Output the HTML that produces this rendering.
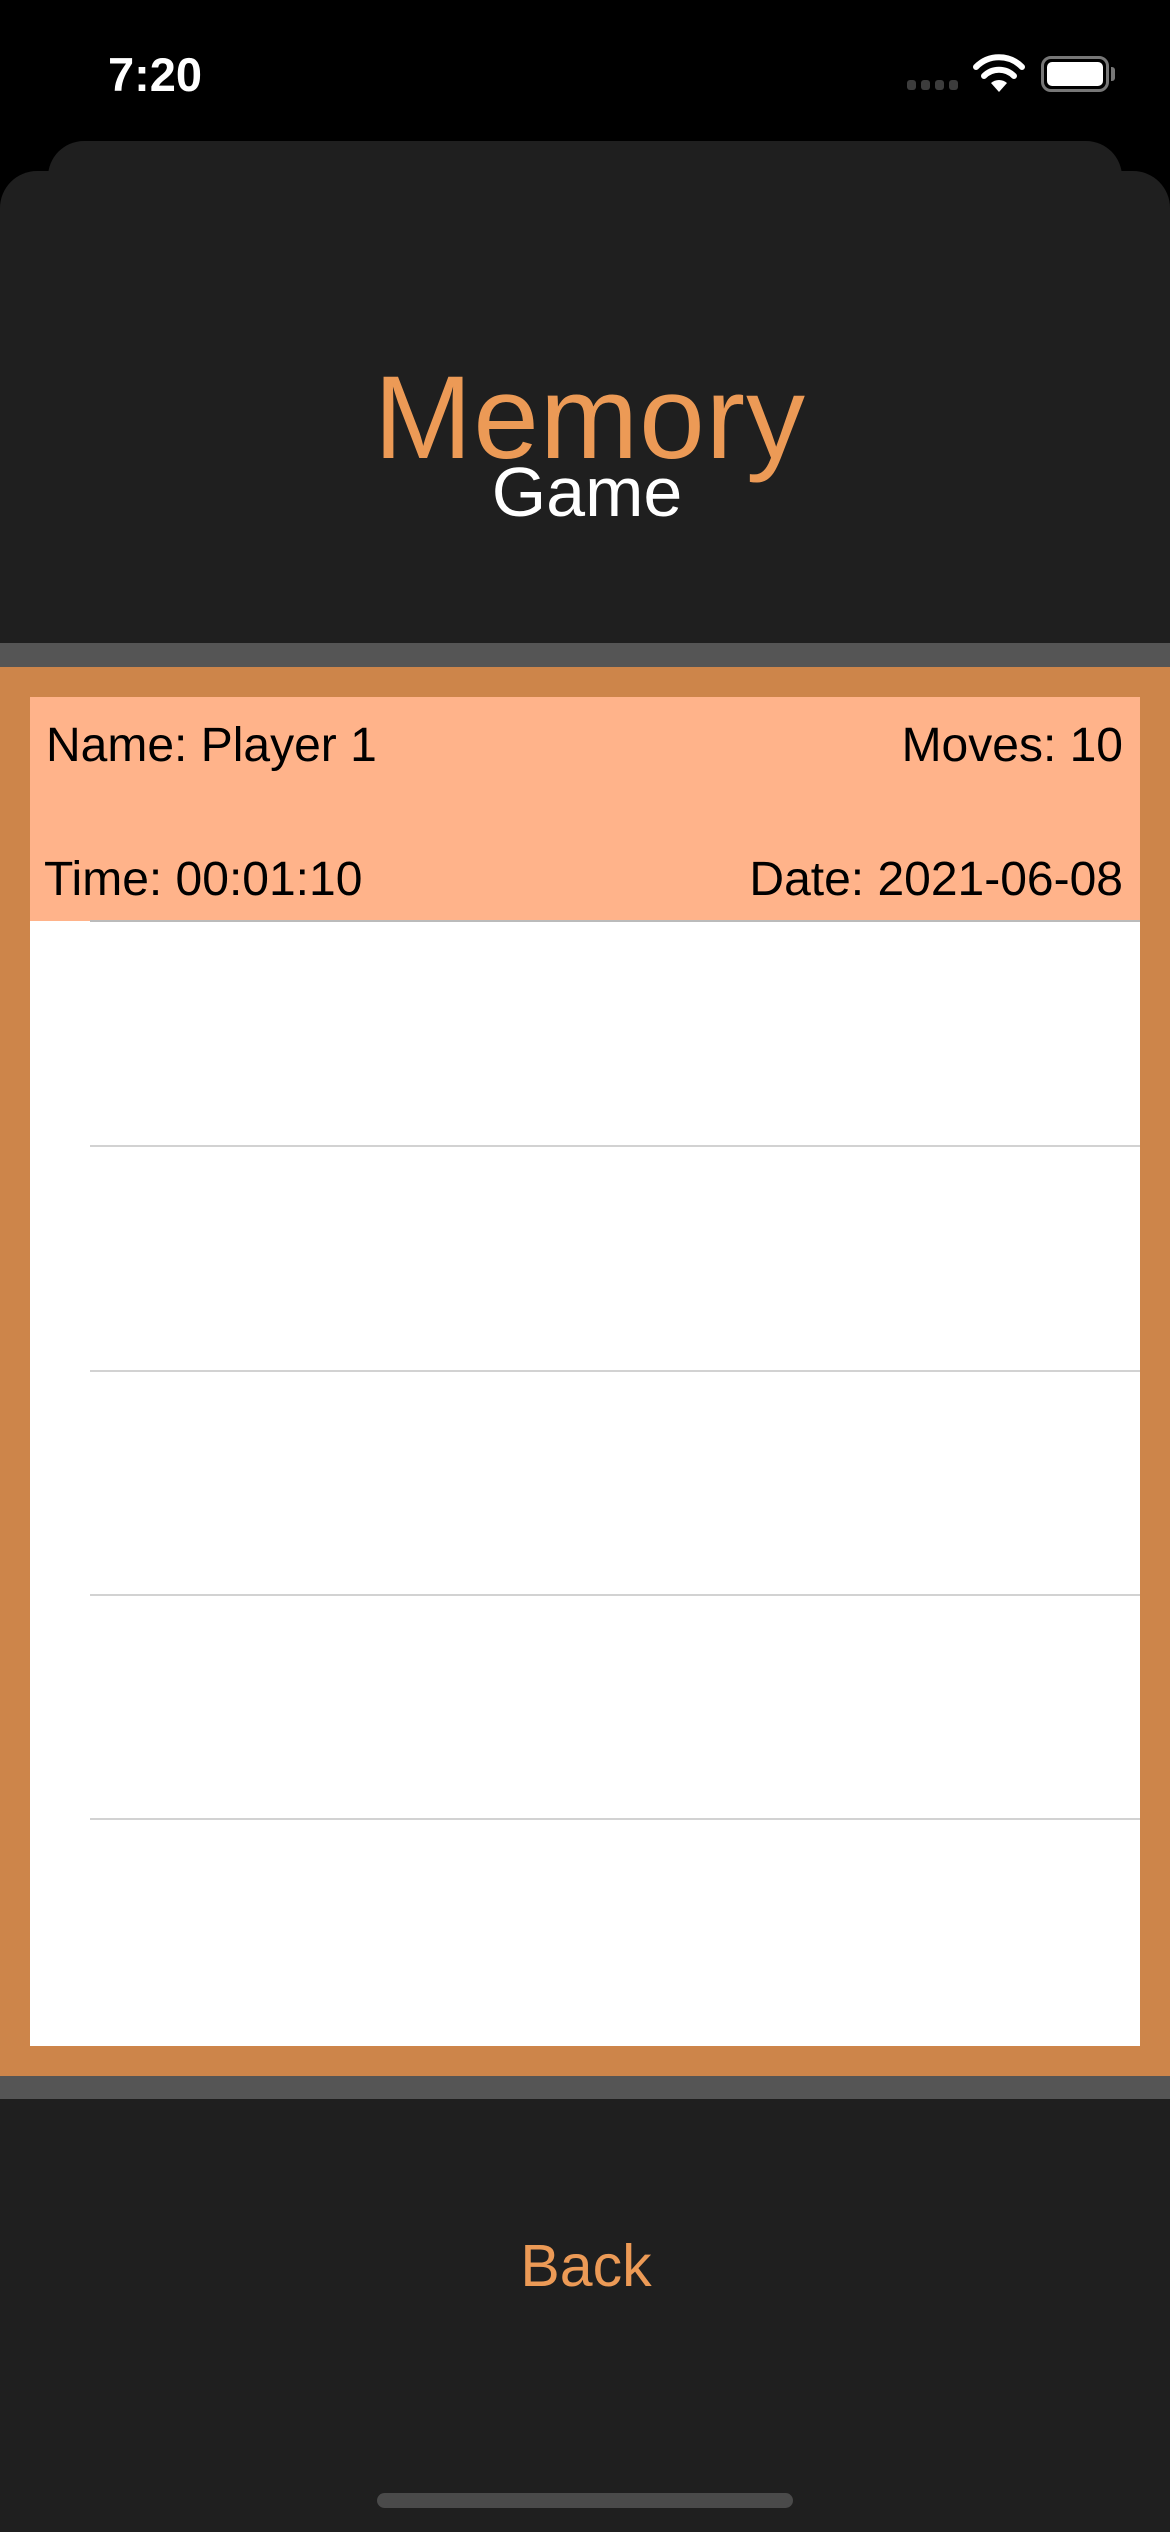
<!DOCTYPE html>
<html><head><meta charset="utf-8"><style>
*{margin:0;padding:0;box-sizing:border-box}
body{width:1170px;height:2532px;background:#000;position:relative;overflow:hidden;font-family:"Liberation Sans",Arial,sans-serif}
.a{position:absolute}
.sep{position:absolute;left:90px;right:30px;height:2px;background:#d2d2d2}
</style></head><body>
<div class="a" style="left:108px;top:50px;font-size:47px;font-weight:bold;color:#fff;line-height:50px">7:20</div>
<div class="a" style="left:907px;top:80px;width:9px;height:10px;border-radius:3px;background:#3c3c3c"></div>
<div class="a" style="left:921px;top:80px;width:9px;height:10px;border-radius:3px;background:#3c3c3c"></div>
<div class="a" style="left:935px;top:80px;width:9px;height:10px;border-radius:3px;background:#3c3c3c"></div>
<div class="a" style="left:949px;top:80px;width:9px;height:10px;border-radius:3px;background:#3c3c3c"></div>
<svg class="a" style="left:972px;top:54px" width="54" height="40" viewBox="0 0 54 40"><path d="M27 38 L19 29 A12 12 0 0 1 35 29 Z" fill="#fff"/><path d="M12 22 A21 21 0 0 1 42 22" stroke="#fff" stroke-width="6" fill="none" stroke-linecap="round"/><path d="M4 13 A32 32 0 0 1 50 13" stroke="#fff" stroke-width="6" fill="none" stroke-linecap="round"/></svg>
<div class="a" style="left:1041px;top:56px;width:68px;height:36px;border:3px solid #777;border-radius:10px;padding:3px"><div style="width:100%;height:100%;background:#fff;border-radius:5px"></div></div>
<div class="a" style="left:1111px;top:67px;width:4px;height:14px;background:#777;border-radius:0 3px 3px 0"></div>
<div class="a" style="left:48px;top:141px;width:1074px;height:100px;background:#1f1f1f;border-radius:36px 36px 0 0"></div>
<div class="a" style="left:0;top:171px;width:1170px;height:480px;background:#1f1f1f;border-radius:37px 37px 0 0"></div>
<div class="a" style="left:0;top:353px;width:1170px;text-align:center;font-size:118px;color:#ec9a56;line-height:130px;padding-left:10px;letter-spacing:1px">Memory</div>
<div class="a" style="left:0;top:452px;width:1170px;text-align:center;font-size:70px;color:#fff;line-height:80px;padding-left:4px">Game</div>
<div class="a" style="left:0;top:643px;width:1170px;height:24px;background:#555"></div>
<div class="a" style="left:0;top:667px;width:1170px;height:1409px;background:#cd854a"></div>
<div class="a" style="left:30px;top:697px;width:1110px;height:1349px;background:#fff"></div>
<div class="a" style="left:30px;top:697px;width:1110px;height:224px;background:#ffb38a"></div>
<div class="a" style="left:46px;top:718px;font-size:48px;line-height:56px;color:#000">Name: Player 1</div>
<div class="a" style="right:47px;top:718px;font-size:48px;line-height:56px;color:#000">Moves: 10</div>
<div class="a" style="left:44px;top:852px;font-size:48px;line-height:56px;color:#000">Time: 00:01:10</div>
<div class="a" style="right:47px;top:852px;font-size:48px;line-height:56px;color:#000">Date: 2021-06-08</div>
<div class="sep" style="top:920px;background:#bbb"></div>
<div class="sep" style="top:1145px"></div>
<div class="sep" style="top:1370px"></div>
<div class="sep" style="top:1594px"></div>
<div class="sep" style="top:1818px"></div>
<div class="a" style="left:0;top:2076px;width:1170px;height:23px;background:#555"></div>
<div class="a" style="left:0;top:2099px;width:1170px;height:433px;background:#1f1f1f"></div>
<div class="a" style="left:0;top:2231px;width:1170px;text-align:center;font-size:59px;line-height:70px;color:#ec9a56;padding-left:2px">Back</div>
<div class="a" style="left:377px;top:2493px;width:416px;height:15px;border-radius:8px;background:#4a4a4a"></div>
</body></html>
